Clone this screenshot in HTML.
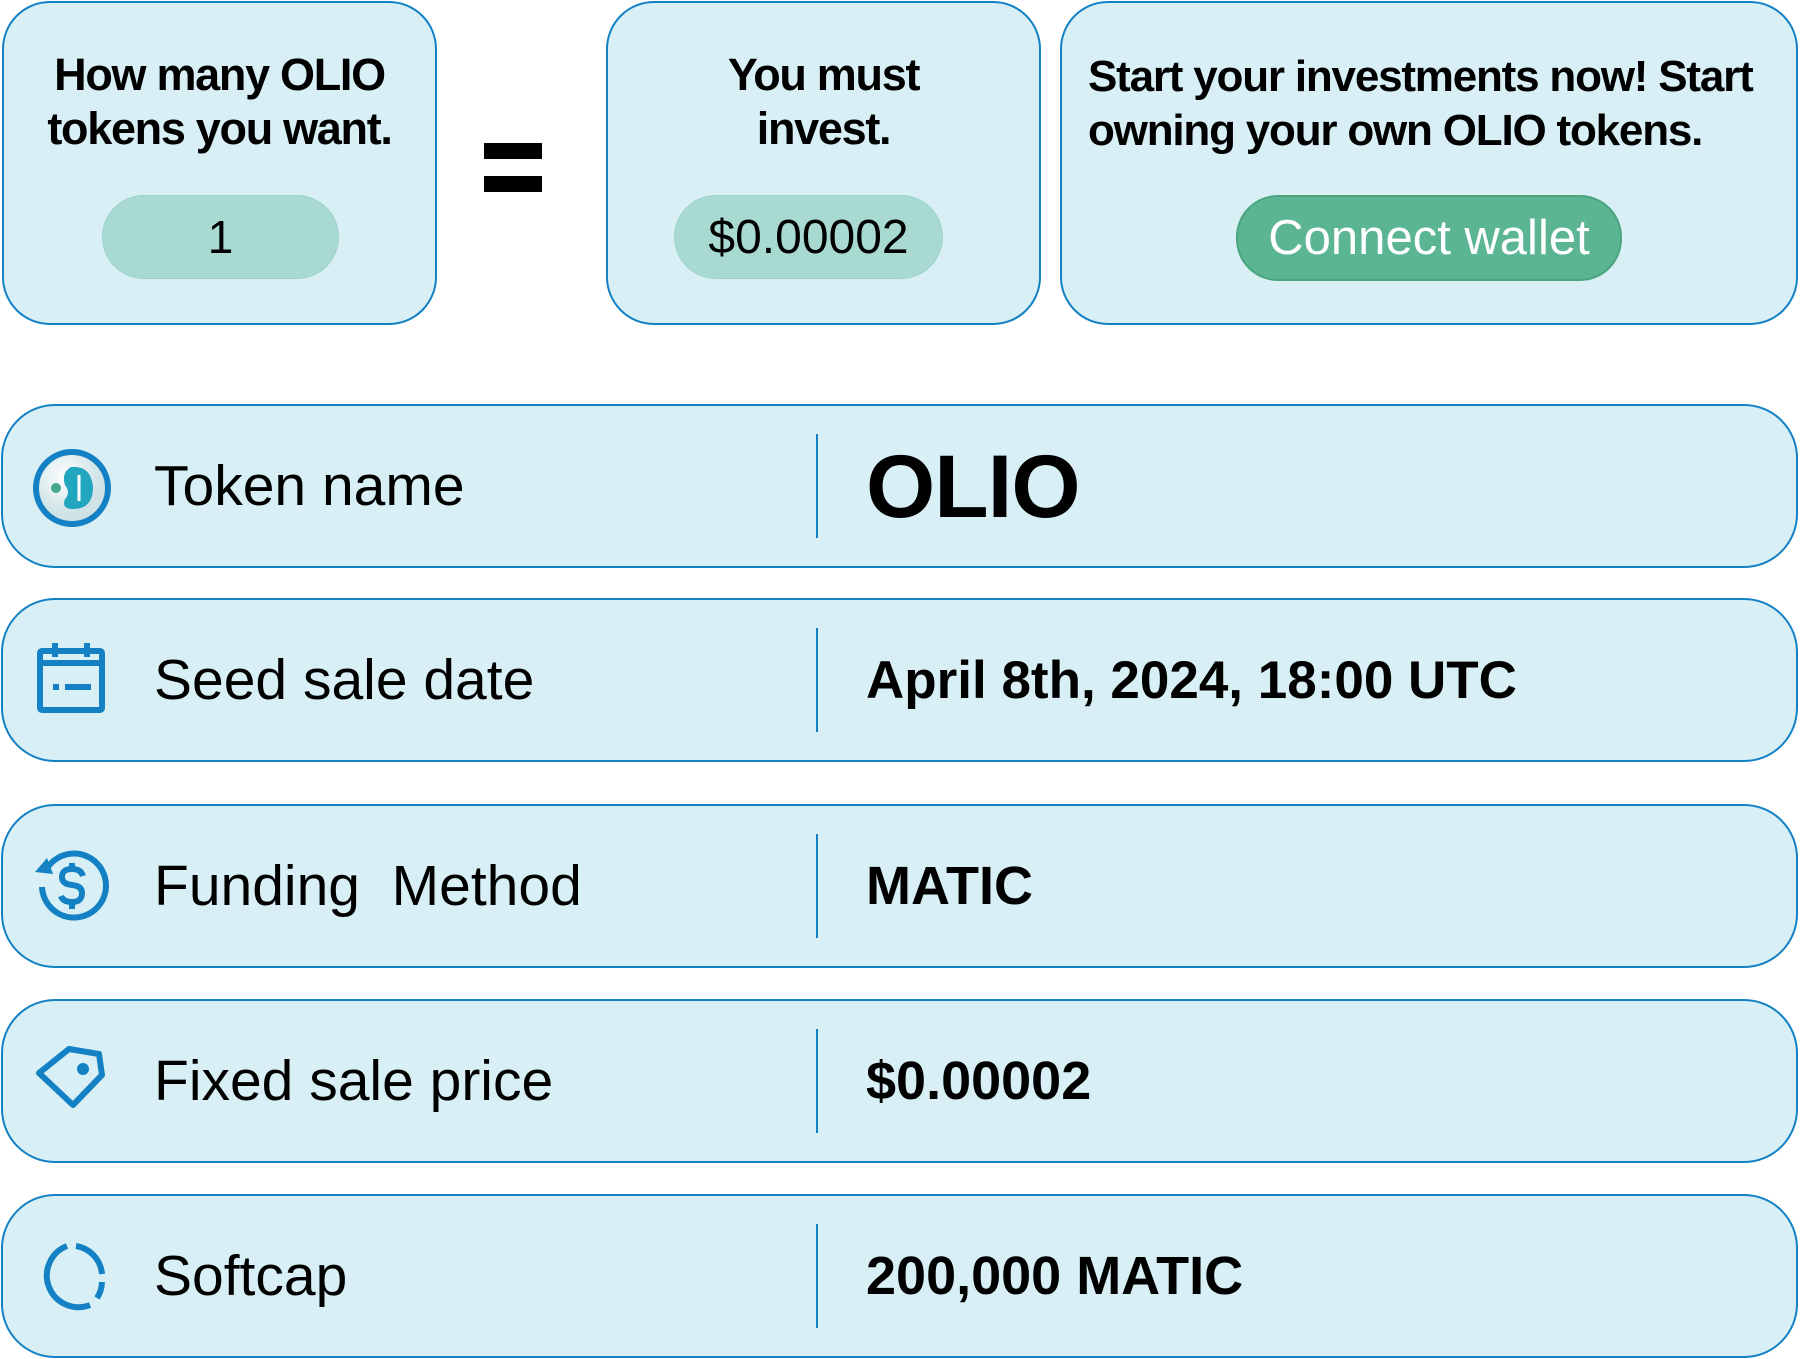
<!DOCTYPE html>
<html><head><meta charset="utf-8"><style>
*{margin:0;padding:0;box-sizing:border-box}
body{width:1800px;height:1359px;background:#fff;position:relative;overflow:hidden;font-family:"Liberation Sans",sans-serif;color:#000}
.card{position:absolute;background:#d8f0f5;border:2px solid #1381c4;border-radius:48px}
.ttl{position:absolute;font-weight:bold;font-size:45px;line-height:54px;letter-spacing:-1.3px;text-align:center}
.pill{position:absolute;background:#a8dad2;border:1px solid #9dd2c9;border-radius:42px;display:flex;align-items:center;justify-content:center;font-size:46px}
.eq{position:absolute;left:484px;width:58px;height:16px;background:#000}
.row{position:absolute;left:1px;width:1797px;height:164px;background:#d8f0f5;border:2px solid #1381c4;border-radius:54px}
.row .div{position:absolute;left:813px;top:28px;bottom:28px;width:2px;background:#1381c4}
.row .lab{position:absolute;left:151px;top:0;height:160px;display:flex;align-items:center;font-size:57px}
.row .val{position:absolute;left:863px;top:0;height:160px;display:flex;align-items:center;font-size:54px;font-weight:bold}
.row svg{position:absolute;left:28px;top:41px}
</style></head><body>

<div class="card" style="left:2px;top:1px;width:435px;height:324px"></div>
<div class="ttl" style="left:2px;top:48px;width:435px">How many OLIO<br>tokens you want.</div>
<div class="pill" style="left:102px;top:195px;width:237px;height:84px">1</div>

<div class="eq" style="top:143px"></div>
<div class="eq" style="top:176px"></div>

<div class="card" style="left:606px;top:1px;width:435px;height:324px"></div>
<div class="ttl" style="left:606px;top:48px;width:435px">You must<br>invest.</div>
<div class="pill" style="left:674px;top:195px;width:269px;height:84px;font-size:48px">$0.00002</div>

<div class="card" style="left:1060px;top:1px;width:738px;height:324px"></div>
<div class="ttl" style="left:1088px;top:50px;width:720px;text-align:left;font-size:44px;letter-spacing:-1.2px">Start your investments now! Start<br>owning your own OLIO tokens.</div>
<div class="pill" style="left:1236px;top:195px;width:386px;height:86px;background:#5bb593;border:2px solid #4aa47f;color:#fff;font-size:49px">Connect wallet</div>

<div class="row" style="top:404px">
<svg width="82" height="82" viewBox="0 0 82 82"><defs><radialGradient id="g" cx="40%" cy="35%"><stop offset="0" stop-color="#fff"/><stop offset="1" stop-color="#cfe3e6"/></radialGradient></defs>
<circle cx="41" cy="41" r="36" fill="url(#g)" stroke="#1381c4" stroke-width="6"/>
<path d="M40 20 Q60 18 62 40 Q62 62 42 62 Q30 62 34 52 Q40 46 34 38 Q30 26 40 20Z" fill="#22a6c0"/>
<path d="M48 28 L48 54" stroke="#fff" stroke-width="3"/>
<circle cx="25" cy="41" r="5" fill="#43a98a"/></svg>
<div class="lab">Token name</div><div class="div"></div>
<div class="val" style="font-size:89px;letter-spacing:-1px">OLIO</div></div>

<div class="row" style="top:598px">
<svg width="82" height="82" viewBox="0 0 82 82" style="top:40px"><rect x="9" y="11" width="62" height="59" rx="2" fill="none" stroke="#1381c4" stroke-width="6"/><path d="M9 23h62" stroke="#1381c4" stroke-width="6"/><path d="M24 3v14M56 3v14" stroke="#1381c4" stroke-width="6"/><path d="M22 47h6M34 47h26" stroke="#1381c4" stroke-width="6"/></svg>
<div class="lab">Seed sale date</div><div class="div"></div>
<div class="val" style="font-size:53px">April 8th, 2024, 18:00 UTC</div></div>

<div class="row" style="top:804px">
<svg width="82" height="82" viewBox="0 0 82 82" style="top:40px"><path d="M15 24 A32 32 0 1 1 11 41" fill="none" stroke="#1381c4" stroke-width="6"/><path d="M4 26 L16 12 L22 28Z" fill="#1381c4"/><path d="M52 30 Q50 23 41 23 Q31 23 31 31 Q31 38 41 39 Q51 40 51 47 Q51 56 41 56 Q32 56 30 50" fill="none" stroke="#1381c4" stroke-width="6"/><path d="M41 17v8M41 54v9" stroke="#1381c4" stroke-width="6"/></svg>
<div class="lab">Funding&nbsp;&nbsp;Method</div><div class="div"></div>
<div class="val">MATIC</div></div>

<div class="row" style="top:999px">
<svg width="82" height="82" viewBox="0 0 82 82" style="top:44px"><path d="M38 4 L68 9 L71 30 L42 60 L8 28Z" fill="none" stroke="#1381c4" stroke-width="6" stroke-linejoin="round"/><circle cx="52" cy="24" r="6" fill="#1381c4"/></svg>
<div class="lab">Fixed sale price</div><div class="div"></div>
<div class="val">$0.00002</div></div>

<div class="row" style="top:1194px">
<svg width="82" height="82" viewBox="0 0 82 82" style="top:40px"><path d="M36 10 A31 31 0 1 0 59 69" fill="none" stroke="#1381c4" stroke-width="6"/><path d="M45 10 A31 31 0 0 1 71 38" fill="none" stroke="#1381c4" stroke-width="6"/><path d="M71 46 A31 31 0 0 1 66 62" fill="none" stroke="#1381c4" stroke-width="6"/></svg>
<div class="lab">Softcap</div><div class="div"></div>
<div class="val">200,000 MATIC</div></div>

</body></html>
